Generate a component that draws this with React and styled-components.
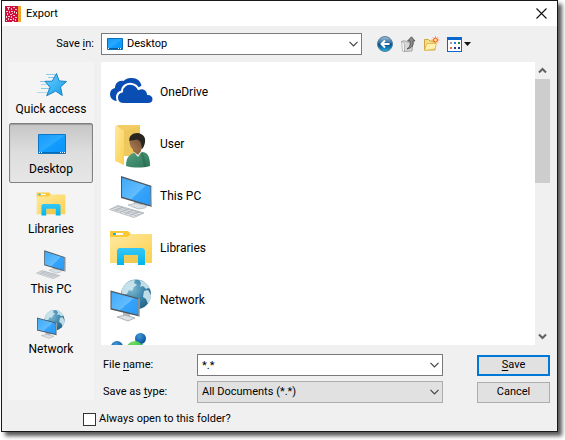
import { useState } from "react";
import styled, { createGlobalStyle, css } from "styled-components";

const places = [
  { name: "Quick access", icon: StarIcon },
  { name: "Desktop", icon: DesktopIcon },
  { name: "Libraries", icon: LibrariesIcon },
  { name: "This PC", icon: ComputerIcon },
  { name: "Network", icon: NetworkIcon },
];

const files = [
  { name: "OneDrive", icon: CloudIcon },
  { name: "User", icon: UserIcon },
  { name: "This PC", icon: ComputerIcon },
  { name: "Libraries", icon: LibrariesIcon },
  { name: "Network", icon: NetworkIcon },
];

const App = () => {
  const [place, setPlace] = useState("Desktop");
  const [fileName, setFileName] = useState("*.*");

  return (
    <Page>
      <GlobalStyle />
      <Gradients />
      <Dialog role="dialog" aria-labelledby="title">
        <TitleBar>
          <LogoIcon />
          <Title id="title">Export</Title>
          <CloseButton type="button" aria-label="Close">
            <svg width="11" height="11" viewBox="0 0 11 11">
              <path d="M.5.5l10 10M10.5.5l-10 10" stroke="#111" strokeWidth="1.1" />
            </svg>
          </CloseButton>
        </TitleBar>

        <Content>
          <SaveInLabel htmlFor="save-in">
            Save <u>i</u>n:
          </SaveInLabel>
          <TopRow>
            <Field $location>
              <FieldIcon>
                <SmallDesktopIcon />
              </FieldIcon>
              <Select id="save-in" $location>
                <option>Desktop</option>
              </Select>
              <FieldArrow>
                <Chevron />
              </FieldArrow>
            </Field>
            <Toolbar>
              <ToolButton type="button" aria-label="Back">
                <BackIcon />
              </ToolButton>
              <ToolButton type="button" aria-label="Up one level">
                <UpIcon />
              </ToolButton>
              <ToolButton type="button" aria-label="Create new folder">
                <NewFolderIcon />
              </ToolButton>
              <ToolButton type="button" aria-label="View menu">
                <ViewsIcon />
              </ToolButton>
            </Toolbar>
          </TopRow>

          <Sidebar aria-label="Places">
            {places.map(({ name, icon: Icon }) => (
              <Place
                key={name}
                type="button"
                $active={name === place}
                onClick={() => setPlace(name)}
              >
                <Icon size={30} />
                {name}
              </Place>
            ))}
          </Sidebar>

          <Main>
            <Browser>
              <FileList>
                {files.map(({ name, icon: Icon }) => (
                  <li key={name}>
                    <FileItem type="button">
                      <Icon size={44} />
                      {name}
                    </FileItem>
                  </li>
                ))}
                <li>
                  <FileItem type="button" aria-label="Homegroup">
                    <HomegroupIcon size={44} />
                  </FileItem>
                </li>
              </FileList>
              <ScrollBar>
                <ScrollButton type="button" aria-label="Scroll up">
                  <ScrollArrow up />
                </ScrollButton>
                <Thumb />
                <ScrollButton type="button" aria-label="Scroll down">
                  <ScrollArrow />
                </ScrollButton>
              </ScrollBar>
            </Browser>

            <Form>
              <FormLabel htmlFor="file-name">
                File <u>n</u>ame:
              </FormLabel>
              <Field>
                <TextInput
                  id="file-name"
                  type="text"
                  value={fileName}
                  onChange={(e) => setFileName(e.target.value)}
                />
                <FieldArrow>
                  <Chevron />
                </FieldArrow>
              </Field>
              <Button type="button" $primary>
                <span>
                  <u>S</u>ave
                </span>
              </Button>

              <FormLabel htmlFor="file-type">
                Save as <u>t</u>ype:
              </FormLabel>
              <Field>
                <Select id="file-type" $muted>
                  <option>All Documents (*.*)</option>
                </Select>
                <FieldArrow>
                  <Chevron />
                </FieldArrow>
              </Field>
              <Button type="button">Cancel</Button>
            </Form>
          </Main>
        </Content>

        <Footer>
          <CheckBox id="always-open" type="checkbox" />
          <label htmlFor="always-open">Always open to this folder?</label>
        </Footer>
      </Dialog>
    </Page>
  );
};

/* shared paint for the icons */
function Gradients() {
  return (
    <Defs aria-hidden="true">
      <defs>
        <linearGradient id="screen" x1="0" y1="0" x2="1" y2="1">
          <stop offset="0" stopColor="#3fa9f8" />
          <stop offset=".55" stopColor="#62bcff" />
          <stop offset=".56" stopColor="#38a4fb" />
          <stop offset="1" stopColor="#2799f5" />
        </linearGradient>
        <linearGradient id="desk" x1="0" y1="0" x2="1" y2="1">
          <stop offset="0" stopColor="#159cfb" />
          <stop offset=".5" stopColor="#2aa9ff" />
          <stop offset=".52" stopColor="#119cff" />
          <stop offset="1" stopColor="#0d94f6" />
        </linearGradient>
        <linearGradient id="folder" x1="0" y1="0" x2="1" y2="1">
          <stop offset="0" stopColor="#ffe9a2" />
          <stop offset="1" stopColor="#fbd04b" />
        </linearGradient>
        <linearGradient id="library" x1="0" y1="0" x2="0" y2="1">
          <stop offset="0" stopColor="#36c7f5" />
          <stop offset="1" stopColor="#00b4ee" />
        </linearGradient>
        <linearGradient id="star" x1="0" y1="0" x2="1" y2="1">
          <stop offset="0" stopColor="#6fcfff" />
          <stop offset="1" stopColor="#109be8" />
        </linearGradient>
        <radialGradient id="globe" cx=".35" cy=".3" r=".8">
          <stop offset="0" stopColor="#82bdd6" />
          <stop offset=".5" stopColor="#4289ae" />
          <stop offset="1" stopColor="#1d5c83" />
        </radialGradient>
        <radialGradient id="ball" cx=".4" cy=".3" r=".7">
          <stop offset="0" stopColor="#4198d8" />
          <stop offset="1" stopColor="#07509c" />
        </radialGradient>
        <radialGradient id="green" cx=".4" cy=".1" r=".9">
          <stop offset="0" stopColor="#72de62" />
          <stop offset="1" stopColor="#13a83a" />
        </radialGradient>
        <linearGradient id="back" x1="0" y1="0" x2="0" y2="1">
          <stop offset="0" stopColor="#a9c4d8" />
          <stop offset=".45" stopColor="#286a9d" />
          <stop offset=".5" stopColor="#07467d" />
          <stop offset="1" stopColor="#25b5ea" />
        </linearGradient>
        <linearGradient id="skin" x1="0" y1="1" x2="1" y2="0">
          <stop offset="0" stopColor="#b08058" />
          <stop offset="1" stopColor="#5f3f27" />
        </linearGradient>
        <linearGradient id="shirt" x1="0" y1="0" x2="1" y2="1">
          <stop offset="0" stopColor="#55a081" />
          <stop offset="1" stopColor="#2b7658" />
        </linearGradient>
      </defs>
    </Defs>
  );
}

function LogoIcon() {
  return (
    <svg width="16" height="16" viewBox="0 0 16 16" shapeRendering="crispEdges">
      <path fill="#d0103c" d="M0 0h13v16H0z" />
      <path fill="#f6a12a" d="M13 0h3v16h-3z" />
      <path
        fill="#f7c5cf"
        d="M2 1h3v1H2zM3 2h1v2H3zM6 2h1v2H6zM8 1h2v1H8zM10 3h2v1h-2zM1 5h2v1H1zM4 5h1v2H4zM6 5h2v1H6zM9 5h1v2H9zM11 6h1v2h-1zM2 7h1v2H2zM5 8h2v1H5zM7 7h1v1H7zM8 9h2v1H8zM1 10h1v2H1zM3 10h2v1H3zM6 10h1v2H6zM10 11h2v1h-2zM3 12h1v2H3zM5 13h2v1H5zM8 12h1v2H8zM10 13h1v2h-1zM1 14h1v1H1zM7 15h2v1H7z"
      />
    </svg>
  );
}

function SmallDesktopIcon() {
  return (
    <svg width="16" height="12" viewBox="0 0 16 12">
      <path d="M.5.5h15v11H.5z" fill="url(#desk)" stroke="#0b6fb9" />
      <path d="M1 10.5h14" stroke="#0a5a9c" />
      <path d="M1 10.5h1M11 10.5h1M13 10.5h1" stroke="#fff" />
    </svg>
  );
}

function DesktopIcon({ size }) {
  return (
    <svg width={size} height={size} viewBox="0 0 30 30">
      <path d="M2.5 5.5h27v19h-27z" fill="url(#desk)" stroke="#0f76c4" />
      <path d="M3 23.5h26" stroke="#0869b0" />
      <path d="M3 23.5h1M5 23.5h1M24 23.5h1M26 23.5h1M28 23.5h1" stroke="#fff" />
    </svg>
  );
}

function StarIcon({ size }) {
  return (
    <svg width={size} height={size} viewBox="0 0 30 30" overflow="visible">
      <path d="M10 5.5h9M12 8.5h6M4 12.5h5M5 19.5h8" stroke="#8cc8ea" />
      <path d="M5 15.5h7M1 23.5h10" stroke="#b4daf0" />
      <path
        d="M20.5 4.5l2.6 7.4 7.4.6-6 5.5 1.8 8.500-6.600-4.400-9 4.600 3.300-8.400-5-6 7.200-.1z"
        fill="url(#star)"
        stroke="#1583c6"
        strokeLinejoin="round"
      />
    </svg>
  );
}

function CloudIcon({ size }) {
  return (
    <svg width={size} height={size} viewBox="0 0 44 44">
      <path
        fill="#0a4db3"
        d="M10 31H8c-4 0-7-3-7-7 0-3 2-5.500 5-6 0-5 4-8 8.500-7C17 8.500 20 8 23 8c5 0 8.500 3 9.500 7.500"
      />
      <path
        fill="#0a4db3"
        stroke="#fff"
        strokeWidth="2"
        d="M15 34c-4 0-7-2.500-7-6.500 0-3.500 2.500-5.500 5-6C13 16 18 13 23 14c3 .5 5 2 6.500 5 5-2 9 .5 9.500 5 3 0 5.500 2.500 5.500 5s-2 5-5.500 5z"
      />
    </svg>
  );
}

function UserIcon({ size }) {
  return (
    <svg width={size} height={size} viewBox="0 0 44 44" overflow="visible">
      <path fill="#f2cd63" d="M8 3h23v31H14z" />
      <path fill="#e3b94f" d="M14 9l17-4v29H14z" opacity=".3" />
      <path fill="url(#folder)" d="M6 3l9 6v34l-9-4z" />
      <path
        fill="url(#shirt)"
        d="M17 44c0-7 2-11 8-13l9-1c5 1 7 5 7 14-7 2-17 2-24 0z"
      />
      <path fill="#24664a" d="M32 31l3 14 3-1-4-13z" opacity=".5" />
      <path fill="#f2f0e8" d="M24 29l5 6 4-6z" />
      <path fill="#956441" d="M24 25h8v4l-3 4-5-4z" />
      <path fill="url(#skin)" d="M20.500 19c0-5 3-7 7-7s8 3 8 8c0 6-4 9-7.500 9-4 0-7.500-4-7.500-10z" />
      <path
        fill="#292521"
        d="M20.500 19c-1-5 3-8 8-8 5 .5 8.500 4 7.500 9-.5 3-1.500 5-3 7l-1-6c-1-2-2-3-4-3.500-3 1-5.500.5-7.500 1.500z"
      />
    </svg>
  );
}

function ComputerIcon({ size }) {
  return (
    <svg width={size} height={size} viewBox="0 0 44 44">
      <path fill="#aeb6bd" d="M25 26l8 3v5h-8z" />
      <path fill="#dce1e5" stroke="#9ea6ad" strokeWidth=".6" d="M19 31l8-2 11 3-2 2-7 1z" />
      <path fill="#4d555c" d="M12 2l31 10v21L12 24z" />
      <path fill="url(#screen)" d="M13 3.800l28.500 9v18.400L13 22.800z" />
      <path fill="#c2c8cc" d="M42 11.800l1.300.5L42.700 33l-1 .2z" />
      <path fill="#e3e6e9" stroke="#a3a8ad" strokeWidth=".7" d="M.5 35.500l8.500-4 26 7.500-10 4.500z" />
      <path
        d="M3 34.500l25 7.500M5.500 33.300l25 7.400M8 32.300l25 7M6 37l8-4M11 38.500l8.500-4M16 40l8.500-4M21 41.500l8.500-4"
        stroke="#a5abb1"
        strokeWidth=".7"
      />
    </svg>
  );
}

function LibrariesIcon({ size }) {
  return (
    <svg width={size} height={size} viewBox="0 0 44 44">
      <path fill="#f9c936" d="M1 5h18l3 3-3 4H1z" />
      <path fill="#fff" d="M4 7h10v2H4z" />
      <path fill="#20aee6" d="M4 7h3v2H4z" />
      <path fill="url(#folder)" d="M1 11h17l4-3h21v29H1z" />
      <path fill="#e9bd44" d="M15 29h14v8H15z" opacity=".55" />
      <path fill="url(#library)" d="M8 39V24l2-2h24l2 2v15h-7V29H15v10z" />
    </svg>
  );
}

function NetworkIcon({ size }) {
  return (
    <svg width={size} height={size} viewBox="0 0 44 44">
      <circle cx="27" cy="16.500" r="15" fill="url(#globe)" />
      <path
        fill="#cfe8ee"
        d="M14 9c3-4 7-7 12-7l-1 3 3 2-3 2-2 4-3-1-2 4-5 1c-1-3 0-6 1-8zM30 2c5 1 9 4 11 9l-2-1-2 1-3-3-3 1 1-4zM35 13l4-1 3 5c0 4-1 6-3 9l-2-5-3-2z"
        opacity=".9"
      />
      <path fill="#b6bdc3" d="M14 33h7v6h-7z" />
      <path fill="#dde1e4" stroke="#959da4" strokeWidth=".7" d="M8 39l8-2 10 3-7 3z" />
      <path fill="#4d555c" d="M1.500 12.500l29 8v18l-29-7z" />
      <path fill="url(#screen)" d="M2.500 14l26.500 7.300v15.500L2.500 30.300z" />
      <path fill="#bcc4ca" d="M29.500 20.300l1 .3v18l-1-.2z" />
    </svg>
  );
}

function HomegroupIcon({ size }) {
  return (
    <svg width={size} height={size} viewBox="0 0 44 44">
      <path d="M24 22c0-6 3-8 7-8s6 3 6 8z" fill="url(#ball)" />
      <circle cx="31.500" cy="8.500" r="5.500" fill="url(#ball)" />
      <circle cx="8" cy="17" r="6" fill="url(#ball)" />
      <circle cx="26" cy="20" r="9" fill="url(#green)" />
    </svg>
  );
}

function BackIcon() {
  return (
    <svg width="16" height="16" viewBox="0 0 16 16">
      <circle cx="8" cy="8" r="7.500" fill="url(#back)" stroke="#51809f" />
      <path d="M12.500 8H4.500M8 4.500L4.500 8 8 11.500" fill="none" stroke="#fff" strokeWidth="2" />
    </svg>
  );
}

function UpIcon() {
  return (
    <svg width="16" height="16" viewBox="0 0 16 16">
      <path d="M2 5h4l1 1h6l-1 9-8 .5z" fill="#d7d7d7" stroke="#969696" strokeWidth=".8" />
      <path d="M1.500 5l3 3v7.500L2.500 15z" fill="#f7f7f7" stroke="#999" strokeWidth=".6" />
      <path d="M7 13c3-2 3.500-4 3-8H7.500L11.500.8 15 5h-2c1 4-1 7-6 8z" fill="#8a8a8a" stroke="#484848" strokeWidth=".8" />
    </svg>
  );
}

function NewFolderIcon() {
  return (
    <svg width="17" height="16" viewBox="0 0 17 16">
      <path d="M1.500 3.500h4L7 5h5v9H1.500z" fill="#f8dc80" stroke="#d2a540" />
      <path d="M1.500 14.500L4 7.500h9.500L12 13z" fill="#fff1af" stroke="#deb54c" strokeWidth=".8" />
      <path d="M12.500 0v8M8.500 4h8M9.700 1.200l5.600 5.600M15.300 1.200L9.700 6.800" stroke="#ff9a62" />
      <circle cx="12.500" cy="4" r="1.900" fill="#ffe98d" stroke="#e64b13" strokeWidth=".9" />
    </svg>
  );
}

function ViewsIcon() {
  return (
    <svg width="25" height="15" viewBox="0 0 25 15" shapeRendering="crispEdges">
      <path d="M0 0h15v15H0z" fill="#0a68cf" />
      <path d="M1 3h13v11H1z" fill="#fff" />
      <path d="M3 5h2v2H3z" fill="#999fb5" />
      <path d="M7 5h2v2H7z" fill="#2d7fd5" />
      <path d="M11 5h2v2h-2z" fill="#168b3b" />
      <path d="M3 10h2v2H3z" fill="#ef6b48" />
      <path d="M7 10h2v2H7z" fill="#233f93" />
      <path d="M11 10h2v2h-2z" fill="#1f3187" />
      <path d="M17 5h7l-3.500 4z" fill="#111" shapeRendering="auto" />
    </svg>
  );
}

function Chevron() {
  return (
    <svg width="9" height="6" viewBox="0 0 9 6">
      <path d="M.5.800l4 4 4-4" fill="none" stroke="#444" strokeWidth="1.200" />
    </svg>
  );
}

function ScrollArrow({ up }) {
  return (
    <svg width="9" height="7" viewBox="0 0 9 7">
      <path
        d={up ? "M1 5.500l3.500-3.500 3.500 3.500" : "M1 1.500l3.500 3.500 3.500-3.500"}
        fill="none"
        stroke="#606060"
        strokeWidth="2"
      />
    </svg>
  );
}

const GlobalStyle = createGlobalStyle`
  * {
    box-sizing: border-box;
  }
  body {
    margin: 0;
    background: #fff;
  }
  body, button, input, select {
    font-family: Roboto, "Open Sans", sans-serif;
    font-size: 11px;
    line-height: 16px;
    color: #000;
  }
  svg {
    display: block;
    flex-shrink: 0;
  }
  u {
    text-underline-offset: 2px;
    text-decoration-skip-ink: none;
  }
`;

const Defs = styled.svg`
  position: absolute;
  width: 0;
  height: 0;
`;

const Page = styled.div`
  padding: 0 7px 8px 1px;
  overflow: hidden;
`;

const Dialog = styled.section`
  background: #f0f0f0;
  border: 1px solid #16181c;
  box-shadow: 4px 4px 4px rgba(0, 0, 0, 0.65);
`;

const TitleBar = styled.header`
  display: flex;
  align-items: center;
  gap: 5px;
  height: 25px;
  padding: 0 10px 0 3px;
  background: #fff;
`;

const Title = styled.h1`
  flex: 1;
  margin: 0;
  font-size: 11px;
  font-weight: normal;
`;

const CloseButton = styled.button`
  padding: 0;
  border: 0;
  background: none;
`;

const Content = styled.div`
  display: grid;
  grid-template-columns: 86px minmax(0, 1fr);
  gap: 7px;
  padding: 7px 7px 0 6px;
`;

const SaveInLabel = styled.label`
  text-align: right;
  line-height: 22px;
`;

const TopRow = styled.div`
  display: flex;
  align-items: center;
  gap: 15px;
`;

const Toolbar = styled.div`
  display: flex;
  align-items: center;
  flex: 1;
  gap: 7px;
`;

const ToolButton = styled.button`
  padding: 0;
  border: 0;
  background: none;
`;

const Field = styled.div`
  position: relative;
  display: flex;
  flex: ${(props) => (props.$location ? "0 1 261px" : "1")};
  min-width: 0;
`;

const FieldIcon = styled.span`
  position: absolute;
  top: 5px;
  left: 6px;
  pointer-events: none;
`;

const FieldArrow = styled.span`
  position: absolute;
  top: 8px;
  right: 4px;
  pointer-events: none;
`;

const control = css`
  width: 100%;
  height: 22px;
  margin: 0;
  padding: 0 20px 0 4px;
  border: 1px solid #7a7a7a;
  border-radius: 0;
  background: #fff;
  outline: none;
`;

const TextInput = styled.input`
  ${control}
`;

const Select = styled.select`
  ${control}
  appearance: none;
  padding-left: ${(props) => (props.$location ? "25px" : "4px")};
  ${(props) =>
    props.$muted &&
    css`
      border-color: #adadad;
      background: #e1e1e1;
    `}
`;

const Sidebar = styled.nav`
  align-self: start;
  min-height: 338px;
  padding: 1px 1px 0;
  background: #f4f4f4;
`;

const Place = styled.button`
  display: flex;
  flex-direction: column;
  align-items: center;
  gap: 2px;
  width: 100%;
  height: 60px;
  padding: 5px 0 0;
  border: 1px solid transparent;
  background: none;
  font-size: 12px;
  white-space: nowrap;
  ${(props) =>
    props.$active &&
    css`
      border-color: #808080;
      border-radius: 2px;
      background: linear-gradient(#c6c6c6, #dedede 50%, #e6e6e6);
      box-shadow: inset 0 1px 1px #999;
    `}
`;

const Main = styled.main`
  display: flex;
  flex-direction: column;
  gap: 9px;
`;

const Browser = styled.div`
  display: flex;
  height: 283px;
  background: #fff;
`;

const FileList = styled.ul`
  flex: 1;
  margin: 0;
  padding: 4px 8px 0;
  list-style: none;
  overflow: hidden;
`;

const FileItem = styled.button`
  display: flex;
  align-items: center;
  gap: 7px;
  width: 100%;
  height: 52px;
  padding: 0;
  border: 0;
  background: none;
  font-size: 12px;
`;

const ScrollBar = styled.div`
  display: flex;
  flex-direction: column;
  width: 15px;
  background: #f0f0f0;
`;

const ScrollButton = styled.button`
  display: flex;
  align-items: center;
  justify-content: center;
  height: 17px;
  padding: 0;
  border: 0;
  background: none;

  &:last-child {
    margin-top: auto;
  }
`;

const Thumb = styled.div`
  height: 104px;
  background: #cdcdcd;
`;

const Form = styled.div`
  display: grid;
  grid-template-columns: 96px minmax(0, 1fr) 107px;
  align-items: center;
  row-gap: 5px;
`;

const FormLabel = styled.label`
  padding-left: 2px;
`;

const Button = styled.button`
  height: 21px;
  margin-left: 34px;
  padding: 0;
  border: ${(props) => (props.$primary ? "2px solid #0078d7" : "1px solid #adadad")};
  background: #e1e1e1;
`;

const Footer = styled.footer`
  display: flex;
  align-items: center;
  gap: 3px;
  padding: 8px 0 4px 81px;
`;

const CheckBox = styled.input`
  appearance: none;
  width: 13px;
  height: 13px;
  margin: 0;
  border: 1px solid #333;
  background: #fff;

  &:checked {
    box-shadow: inset 0 0 0 2px #fff;
    background: #333;
  }
`;

export default App;
